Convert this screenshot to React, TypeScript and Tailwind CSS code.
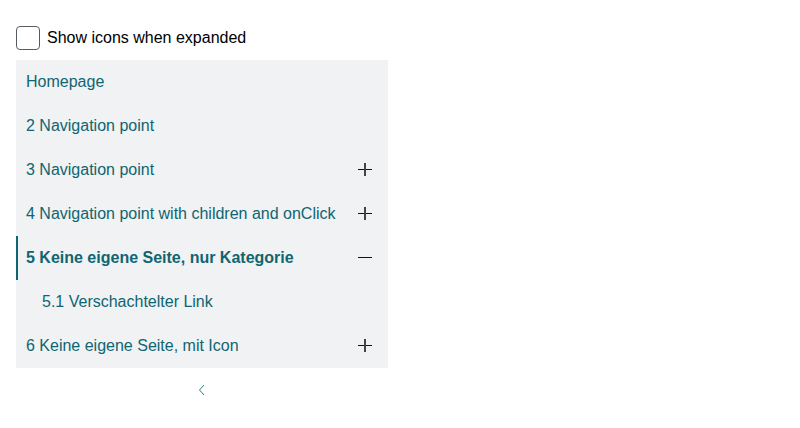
import React, { useState } from 'react';

type NavItem = {
  id: string;
  label: string;
  children?: boolean;
  open?: boolean;
  active?: boolean;
  nested?: boolean;
};

const items: NavItem[] = [
  { id: '1', label: 'Homepage' },
  { id: '2', label: '2 Navigation point' },
  { id: '3', label: '3 Navigation point', children: true },
  { id: '4', label: '4 Navigation point with children and onClick', children: true },
  { id: '5', label: '5 Keine eigene Seite, nur Kategorie', children: true, open: true, active: true },
  { id: '5.1', label: '5.1 Verschachtelter Link', nested: true },
  { id: '6', label: '6 Keine eigene Seite, mit Icon', children: true },
];

function PlusMinus({ open }: { open?: boolean }) {
  return (
    <svg width="14" height="14" viewBox="0 0 14 14" className="text-[#111]">
      <path d="M0 6.5h14" stroke="currentColor" strokeWidth="1" />
      {!open && <path d="M7 0v13" stroke="#444" strokeWidth="2" />}
    </svg>
  );
}

export default function App() {
  const [showIcons, setShowIcons] = useState(false);

  return (
    <div className="px-4 pt-[26px] font-['Liberation_Sans',Arial,sans-serif]">
      <label className="flex items-center gap-[7px] h-6 mb-[10px] text-[16px] text-black cursor-pointer">
        <span
          onClick={() => setShowIcons(!showIcons)}
          className="w-6 h-6 rounded-[4px] border-[1.5px] border-[#555b60] bg-white"
        />
        Show icons when expanded
      </label>

      <nav className="w-[372px] bg-[#f1f2f4]">
        {items.map((item) => (
          <div
            key={item.id}
            className={`flex items-center justify-between h-11 pr-4 text-[16px] text-[#0f6570] border-l-2 ${
              item.active ? 'border-[#0f6570] font-bold' : 'border-transparent'
            } ${item.nested ? 'pl-6' : 'pl-2'}`}
          >
            <span>{item.label}</span>
            {item.children && <PlusMinus open={item.open} />}
          </div>
        ))}
      </nav>

      <div className="w-[372px] flex justify-center mt-[16px]">
        <svg width="8" height="12" viewBox="0 0 8 12">
          <path d="M6 1L1.5 6L6 11" fill="none" stroke="#2a7f88" strokeWidth="1" />
        </svg>
      </div>
    </div>
  );
}
